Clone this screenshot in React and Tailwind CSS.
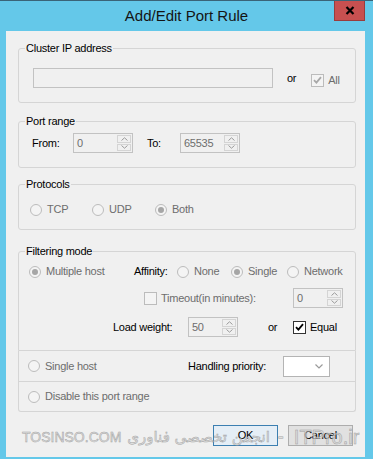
const dim = 'text-[#6d6d6d]';

function Radio({ checked, label, className = '' }) {
  return (
    <span className={`flex items-center gap-[5px] ${className}`}>
      <span className="flex h-[12px] w-[12px] shrink-0 items-center justify-center rounded-full border border-[#bcbcbc] bg-[#f4f4f4]">
        {checked && <span className="h-[6px] w-[6px] rounded-full bg-[#a6a6a6]" />}
      </span>
      <span className={dim}>{label}</span>
    </span>
  );
}

function Check({ checked, enabled, label, className = '' }) {
  return (
    <span className={`flex items-center gap-[4px] ${className}`}>
      <span
        className={`flex h-[13px] w-[13px] shrink-0 items-center justify-center border ${
          enabled ? 'border-[#333333] bg-white' : 'border-[#bcbcbc] bg-[#f4f4f4]'
        }`}
      >
        {checked && (
          <svg width="9" height="8" viewBox="0 0 9 8">
            <path d="M1 4.2 L3.4 6.6 L8 1.2" fill="none" stroke={enabled ? '#000' : '#a8a8a8'} strokeWidth="1.8" />
          </svg>
        )}
      </span>
      <span className={enabled ? 'text-black' : dim}>{label}</span>
    </span>
  );
}

function Caret({ up }) {
  return (
    <svg width="7" height="4" viewBox="0 0 7 4">
      <path d={up ? 'M0.5 3.5 L3.5 0.8 L6.5 3.5' : 'M0.5 0.5 L3.5 3.2 L6.5 0.5'} fill="none" stroke="#9a9a9a" strokeWidth="1" />
    </svg>
  );
}

// disabled numeric up/down
function Spin({ value, className = '' }) {
  return (
    <div className={`flex h-[20px] shrink-0 border border-[#c2c2c2] bg-[#f0f0f0] ${className}`}>
      <span className={`flex-1 pl-[3px] leading-[18px] ${dim}`}>{value}</span>
      <div className="flex w-[16px] flex-col gap-[1px] p-[1px]">
        <span className="flex flex-1 items-center justify-center border border-[#d4d4d4]">
          <Caret up />
        </span>
        <span className="flex flex-1 items-center justify-center border border-[#d4d4d4]">
          <Caret />
        </span>
      </div>
    </div>
  );
}

export default function App() {
  return (
    <div className="relative flex h-[459px] w-[373px] flex-col overflow-hidden border-t border-[#3a6478] bg-[#64c8e9] font-['Liberation_Sans',Arial,sans-serif]">
      {/* Title bar */}
      <div className="relative flex h-[30px] items-center justify-center">
        <span className="text-[15px] leading-[18px] text-[#141414]">Add/Edit Port Rule</span>
        <div className="absolute right-[8px] top-[-1px] flex h-[21px] w-[31px] items-center justify-center border-b border-l border-r border-[#9a3c3c] bg-[#c75050]">
          <svg width="10" height="9" viewBox="0 0 10 9">
            <path d="M1.5 1 L8.5 8 M8.5 1 L1.5 8" stroke="#000" strokeWidth="2.2" />
          </svg>
        </div>
      </div>

      {/* Client area */}
      <div className="relative ml-[6px] flex h-[426px] w-[359px] flex-col bg-[#f0f0f0] text-[11px] leading-[13px] tracking-[-0.25px] text-black">
        <fieldset className="ml-[12px] mt-[11px] h-[61px] w-[338px] rounded-[3px] border border-[#d5d5d5]">
          <legend className="ml-[6px] px-[1px]">Cluster IP address</legend>
          <div className="mt-[13px] flex items-center">
            <div className="ml-[14px] h-[20px] w-[240px] border border-[#c2c2c2] bg-[#f0f0f0]" />
            <span className="ml-[14px]">or</span>
            <Check checked label="All" className="ml-[15px] mt-[4px]" />
          </div>
        </fieldset>

        <fieldset className="ml-[12px] mt-[12px] h-[53px] w-[338px] rounded-[3px] border border-[#d5d5d5]">
          <legend className="ml-[6px] px-[1px]">Port range</legend>
          <div className="mt-[5px] flex items-center">
            <span className="ml-[13px] w-[41px]">From:</span>
            <Spin value="0" className="w-[60px]" />
            <span className="ml-[14px] w-[33px]">To:</span>
            <Spin value="65535" className="w-[60px]" />
          </div>
        </fieldset>

        <fieldset className="ml-[12px] mt-[10px] h-[52px] w-[338px] rounded-[3px] border border-[#d5d5d5]">
          <legend className="ml-[6px] px-[1px]">Protocols</legend>
          <div className="mt-[12px] flex items-center">
            <Radio label="TCP" className="ml-[11px] w-[62px]" />
            <Radio label="UDP" className="w-[63px]" />
            <Radio checked label="Both" />
          </div>
        </fieldset>

        <fieldset className="ml-[12px] mt-[15px] h-[106px] w-[338px] rounded-t-[3px] border border-[#d5d5d5]">
          <legend className="ml-[6px] px-[1px]">Filtering mode</legend>
          <div className="mt-[7px] flex items-center">
            <Radio checked label="Multiple host" className="ml-[10px] w-[105px]" />
            <span className="w-[43px]">Affinity:</span>
            <Radio label="None" className="w-[54px]" />
            <Radio checked label="Single" className="w-[56px]" />
            <Radio label="Network" />
          </div>
          <div className="mt-[10px] flex items-center">
            <Check label="Timeout(in minutes):" className="ml-[125px] w-[149px]" />
            <Spin value="0" className="w-[50px]" />
          </div>
          <div className="mt-[9px] flex items-center">
            <span className="ml-[94px] w-[75px]">Load weight:</span>
            <Spin value="50" className="w-[50px]" />
            <span className="ml-[30px] w-[25px]">or</span>
            <Check checked enabled label="Equal" />
          </div>
        </fieldset>

        <div className="ml-[12px] flex h-[31px] w-[338px] items-center border-x border-b border-[#d5d5d5]">
          <Radio label="Single host" className="ml-[9px] w-[160px]" />
          <span className="w-[95px]">Handling priority:</span>
          <div className="flex h-[21px] w-[47px] items-center justify-end border border-[#b4b4b4] bg-white pr-[6px]">
            <svg width="8" height="5" viewBox="0 0 8 5">
              <path d="M0.5 0.5 L4 4 L7.5 0.5" fill="none" stroke="#9a9a9a" strokeWidth="1.2" />
            </svg>
          </div>
        </div>
        <div className="ml-[12px] flex h-[30px] w-[338px] items-center rounded-b-[3px] border-x border-b border-[#d5d5d5]">
          <Radio label="Disable this port range" className="ml-[9px]" />
        </div>

        <div className="mr-[12px] mt-[13px] flex justify-end gap-[10px]">
          <button className="h-[21px] w-[65px] border border-[#3c7fb1] bg-[#e5eef6] text-black">OK</button>
          <button className="h-[21px] w-[65px] border border-[#adadad] bg-[#e1e1e1] text-black">Cancel</button>
        </div>

        {/* watermark overlay */}
        <div className="pointer-events-none absolute left-[16px] top-[394px] flex h-[24px] items-center tracking-normal text-[#dadada] opacity-75 [-webkit-text-stroke:0.5px_#8a8a8a]">
          <span className="text-[14px] leading-[16px]">TOSINSO.COM</span>
          <span dir="rtl" className="ml-[6px] font-['DejaVu_Sans',sans-serif] text-[15px] leading-[18px]">
            انجمن تخصصی فناوری
          </span>
          <span className="ml-[8px] text-[18px]">-</span>
          <span className="ml-[10px] text-[20px] leading-[22px]">ITPro.ir</span>
        </div>
      </div>
    </div>
  );
}
